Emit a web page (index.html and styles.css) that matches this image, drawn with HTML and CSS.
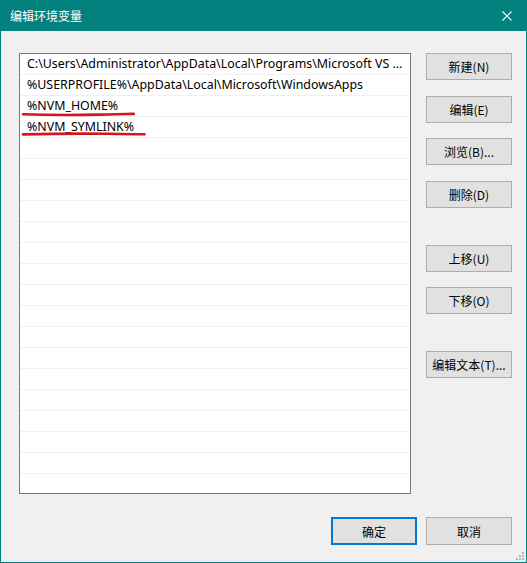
FILE: index.html
```html
<!DOCTYPE html>
<html lang="zh-CN">
<head>
<meta charset="utf-8">
<title>编辑环境变量</title>
<link rel="stylesheet" href="styles.css">
</head>
<body>
<div class="window">
  <div class="titlebar">
    <span class="title">编辑环境变量</span>
    <svg class="close" width="10" height="10" viewBox="0 0 10 10"><path d="M0.5 0.5 L9.5 9.5 M9.5 0.5 L0.5 9.5" stroke="#fff" stroke-width="1.1" fill="none"/></svg>
  </div>
  <div class="content">
    <div class="main">
      <div class="list">
        <div class="row">C:\Users\Administrator\AppData\Local\Programs\Microsoft VS ...</div>
        <div class="row">%USERPROFILE%\AppData\Local\Microsoft\WindowsApps</div>
        <div class="row">%NVM_HOME%</div>
        <div class="row">%NVM_SYMLINK%</div>
        <div class="row"></div><div class="row"></div><div class="row"></div><div class="row"></div>
        <div class="row"></div><div class="row"></div><div class="row"></div><div class="row"></div>
        <div class="row"></div><div class="row"></div><div class="row"></div><div class="row"></div>
        <div class="row"></div><div class="row"></div><div class="row"></div><div class="row"></div>
        <div class="row last"></div>
        <svg class="marks" width="392" height="441" viewBox="0 0 392 441">
          <path d="M4 61.2 Q40 62.6 80 61.6 T114 61" stroke="#d9131b" stroke-width="2.6" fill="none" stroke-linecap="round"/>
          <path d="M4 81.4 Q50 80.2 90 80.8 T125 81.2" stroke="#d9131b" stroke-width="2.6" fill="none" stroke-linecap="round"/>
        </svg>
      </div>
      <div class="side">
        <button class="btn">新建(N)</button>
        <button class="btn">编辑(E)</button>
        <button class="btn">浏览(B)...</button>
        <button class="btn">删除(D)</button>
        <button class="btn sep">上移(U)</button>
        <button class="btn">下移(O)</button>
        <button class="btn sep">编辑文本(T)...</button>
      </div>
    </div>
    <div class="footer">
      <button class="btn ok">确定</button>
      <button class="btn">取消</button>
    </div>
  </div>
  <svg class="grip" width="9" height="9" viewBox="0 0 9 9">
    <rect x="7" y="1" width="2" height="2" fill="#b8b8b8"/>
    <rect x="4" y="4" width="2" height="2" fill="#b8b8b8"/>
    <rect x="7" y="4" width="2" height="2" fill="#b8b8b8"/>
    <rect x="1" y="7" width="2" height="2" fill="#b8b8b8"/>
    <rect x="4" y="7" width="2" height="2" fill="#b8b8b8"/>
    <rect x="7" y="7" width="2" height="2" fill="#b8b8b8"/>
  </svg>
</div>
</body>
</html>
```

FILE: styles.css
```css
* { box-sizing: border-box; }
html, body { margin: 0; padding: 0; }
body {
  font-family: "Noto Sans", "Noto Sans CJK SC", sans-serif;
  font-size: 12px;
  color: #000;
  background: #f0f0f0;
}
.window {
  position: relative;
  width: 527px;
  height: 563px;
  background: #f0f0f0;
  border: 1px solid #03817f;
  border-top: none;
  display: flex;
  flex-direction: column;
}
.titlebar {
  height: 31px;
  margin: 0 -1px;
  background: #03817f;
  color: #fff;
  display: flex;
  align-items: center;
  justify-content: space-between;
  padding: 0 15px 0 10px;
}
.title {
  font-family: "Noto Sans CJK SC", sans-serif;
  font-size: 12px;
  line-height: 1;
  margin-top: 1px;
}
.close { display: block; }
.content {
  flex: 1;
  padding: 22px 14px 0 18px;
  display: flex;
  flex-direction: column;
}
.main {
  display: flex;
  gap: 15px;
}
.list {
  position: relative;
  width: 392px;
  height: 441px;
  background: #fff;
  border: 1px solid #7a7a7a;
  overflow: hidden;
  padding-right: 2px;
}
.row {
  height: 21px;
  line-height: 20px;
  border-bottom: 1px solid #f0f0f0;
  padding-left: 7px;
  white-space: nowrap;
  overflow: hidden;
  font-family: "Noto Sans", "Noto Sans CJK SC", sans-serif;
  font-size: 12.4px;
  color: #000;
}
.marks {
  position: absolute;
  left: -1px;
  top: -1px;
  pointer-events: none;
}
.side {
  display: flex;
  flex-direction: column;
  gap: 15.7px;
}
.btn {
  width: 86px;
  height: 27px;
  background: #e1e1e1;
  border: 1px solid #adadad;
  font-family: "Noto Sans CJK SC", sans-serif;
  font-size: 12px;
  color: #000;
  padding: 0;
  margin: 0;
  display: flex;
  align-items: center;
  justify-content: center;
}
.btn.sep { margin-top: 21px; }
.footer {
  margin-top: 23px;
  display: flex;
  justify-content: flex-end;
  gap: 9px;
}
.footer .btn { height: 28px; }
.btn.ok {
  border: 2px solid #0078d7;
}
.grip {
  position: absolute;
  right: 2px;
  bottom: 2px;
}
```
